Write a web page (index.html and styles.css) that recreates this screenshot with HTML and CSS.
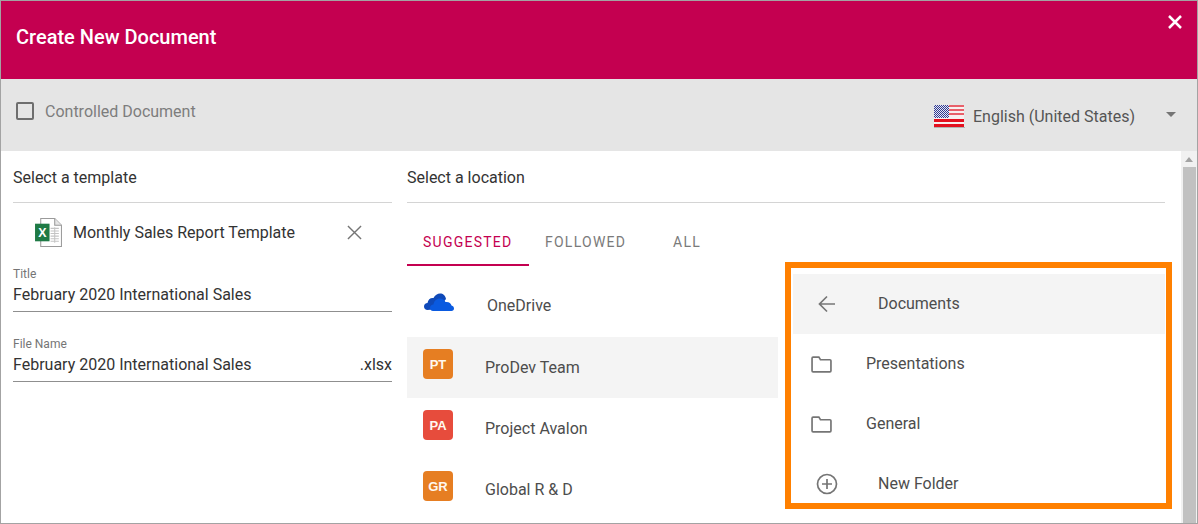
FILE: index.html
```html
<!DOCTYPE html>
<html lang="en">
<head>
    <meta charset="UTF-8">
    <meta name="viewport" content="width=device-width, initial-scale=1.0">
    <title>Create New Document</title>
    <link rel="stylesheet" href="styles.css">
</head>
<body>
    <div class="dialog">
        <header class="title-bar">
            <h1>Create New Document</h1>
            <svg class="close-icon" viewBox="0 0 16 16"><path d="M2 2L14 14M14 2L2 14"/></svg>
        </header>

        <div class="options-bar">
            <label class="controlled">
                <span class="checkbox"></span>
                Controlled Document
            </label>
            <div class="language">
                <svg class="flag" viewBox="0 0 31 23">
                    <defs>
                        <pattern id="stars" width="2" height="2" patternUnits="userSpaceOnUse">
                            <rect width="2" height="2" fill="#2f3a8f"/>
                            <rect width="1" height="1" fill="#e4e6f4"/>
                            <rect x="1" y="1" width="1" height="1" fill="#e4e6f4"/>
                        </pattern>
                    </defs>
                    <rect y="22" width="31" height="1" fill="#b3b3b3"/>
                    <rect width="30" height="22" fill="#f7f0f0"/>
                    <path fill="#e8606a" d="M0 0h30v2H0zM0 4h30v2H0zM0 8h30v2H0z"/>
                    <path fill="#e3101f" d="M0 14h30v3H0zM0 19h30v3H0z"/>
                    <rect width="15" height="13" fill="url(#stars)"/>
                </svg>
                <span>English (United States)</span>
                <span class="caret"></span>
            </div>
        </div>

        <div class="content">
            <div class="columns">
                <section class="template-col">
                    <h2 class="col-title">Select a template</h2>
                    <div class="template">
                        <svg class="excel-icon" viewBox="0 0 26 28">
                            <path fill="#fff" stroke="#9a9a9a" d="M5.500 .5H19L25.500 7V27.500H5.500z"/>
                            <path fill="#e6e6e6" stroke="#9a9a9a" d="M19 .5V7H25.500"/>
                            <path stroke="#c4c4c4" d="M15 10h8M15 12.500h8M15 15h8M15 17.500h8M15 20h8M15 22.500h8M19 9v15"/>
                            <rect y="5.500" width="14" height="17" fill="#1f7a45"/>
                            <text x="7" y="18" class="excel-x">X</text>
                        </svg>
                        <span class="template-name">Monthly Sales Report Template</span>
                        <svg class="clear-icon" viewBox="0 0 16 16"><path d="M1 1L15 15M15 1L1 15"/></svg>
                    </div>
                    <div class="field field-title">
                        <span class="field-label">Title</span>
                        <div class="field-value">February 2020 International Sales</div>
                    </div>
                    <div class="field field-file">
                        <span class="field-label">File Name</span>
                        <div class="field-value">
                            <span>February 2020 International Sales</span>
                            <span>.xlsx</span>
                        </div>
                    </div>
                </section>

                <section class="location-col">
                    <h2 class="col-title">Select a location</h2>
                    <div class="location-body">
                        <div class="sites">
                            <nav class="tabs">
                                <a class="tab tab-suggested active">SUGGESTED</a>
                                <a class="tab tab-followed">FOLLOWED</a>
                                <a class="tab tab-all">ALL</a>
                            </nav>
                            <ul class="site-list">
                                <li class="site site-onedrive">
                                    <svg class="onedrive-icon" viewBox="0 0 30 18">
                                        <path fill="#0f49b8" d="M3.500 17C1.500 17 0 15.500 0 13.500C0 11.500 1.500 10 3.500 10C4 6.500 6.500 4.500 9.500 5C11 2 13.500 0.500 16 0.500C19 0.500 21.500 2.500 22 6L14 16Z"/>
                                        <path fill="#0a5ae0" d="M9 18C7 18 6 16.500 6 15C6 13 7.500 11.500 9.500 11.500C10 8 12.500 5.500 16 5.500C18.500 5.500 20.500 7 21.500 9C25 8.500 27 10.500 27.500 12.500C29 12.800 30 14 30 15.500C30 17 29 18 27.500 18Z"/>
                                    </svg>
                                    <span>OneDrive</span>
                                </li>
                                <li class="site selected">
                                    <span class="avatar avatar-orange">PT</span>
                                    <span>ProDev Team</span>
                                </li>
                                <li class="site">
                                    <span class="avatar avatar-red">PA</span>
                                    <span>Project Avalon</span>
                                </li>
                                <li class="site">
                                    <span class="avatar avatar-orange">GR</span>
                                    <span>Global R &amp; D</span>
                                </li>
                            </ul>
                        </div>

                        <ul class="folders">
                            <li class="folder folder-back">
                                <svg class="folder-action" viewBox="0 0 24 24"><path d="M20 12H5M12 4.500L4.500 12L12 19.500"/></svg>
                                <span>Documents</span>
                            </li>
                            <li class="folder">
                                <svg class="folder-icon" viewBox="0 0 20 16"><path d="M1 3V14C1 14.600 1.400 15 2 15H18C18.600 15 19 14.600 19 14V4.500C19 3.900 18.600 3.500 18 3.500H9L7.500 1H2C1.400 1 1 1.400 1 2Z"/></svg>
                                <span>Presentations</span>
                            </li>
                            <li class="folder">
                                <svg class="folder-icon" viewBox="0 0 20 16"><path d="M1 3V14C1 14.600 1.400 15 2 15H18C18.600 15 19 14.600 19 14V4.500C19 3.900 18.600 3.500 18 3.500H9L7.500 1H2C1.400 1 1 1.400 1 2Z"/></svg>
                                <span>General</span>
                            </li>
                            <li class="folder folder-new">
                                <svg class="folder-action" viewBox="0 0 24 24"><circle cx="12" cy="12" r="9.500"/><path d="M12 7V17M7 12H17"/></svg>
                                <span>New Folder</span>
                            </li>
                        </ul>
                    </div>
                </section>
            </div>

            <div class="scrollbar">
                <span class="scroll-up"></span>
                <span class="scroll-thumb"></span>
            </div>
        </div>

        <div class="highlight"></div>
    </div>
</body>
</html>
```

FILE: styles.css
```css
* {
    box-sizing: border-box;
}
html, body {
    margin: 0;
    height: 100%;
    overflow: hidden;
}
body {
    font-family: Roboto, "Liberation Sans", sans-serif;
    font-size: 16px;
    color: #333;
    background-color: #fff;
}
ul {
    list-style: none;
    margin: 0;
    padding: 0;
}
.dialog {
    position: relative;
    display: flex;
    flex-direction: column;
    height: 524px;
    border: 1px solid #a3a3a3;
    overflow: hidden;
}
.title-bar {
    display: flex;
    justify-content: space-between;
    flex: none;
    height: 78px;
    padding: 13px 14px 0 15px;
    background-color: #c40050;
    color: #fff;
}
.title-bar h1 {
    margin: 10px 0 0;
    font-size: 20px;
    font-weight: 500;
    line-height: 26px;
}
.close-icon {
    width: 16px;
    height: 16px;
    fill: none;
    stroke: #fff;
    stroke-width: 2.500;
}
.options-bar {
    display: flex;
    justify-content: space-between;
    flex: none;
    height: 72px;
    background-color: #e5e5e5;
}
.controlled {
    display: flex;
    align-items: center;
    gap: 11px;
    height: 64px;
    padding-left: 15px;
    color: #7d7d7d;
}
.checkbox {
    width: 18px;
    height: 18px;
    border: 2px solid #6e6e6e;
    border-radius: 2px;
}
.language {
    display: flex;
    align-items: center;
    width: 263px;
    height: 74px;
    color: #555;
}
.flag {
    width: 31px;
    height: 23px;
    margin-right: 8px;
}
.caret {
    width: 0;
    height: 0;
    margin: -4px 0 0 31px;
    border-left: 5px solid transparent;
    border-right: 5px solid transparent;
    border-top: 5px solid #757575;
}
.content {
    display: flex;
    flex: 1;
    min-height: 0;
}
.columns {
    display: flex;
    flex: 1;
    padding: 0 16px 0 12px;
}
.col-title {
    height: 52px;
    margin: 0;
    padding-top: 17px;
    border-bottom: 1px solid #d4d4d4;
    font-size: 16px;
    font-weight: 400;
    line-height: 20px;
    color: #333;
}
.template-col {
    flex: none;
    width: 379px;
    margin-right: 15px;
}
.template {
    display: flex;
    align-items: center;
    height: 58px;
    padding-left: 22px;
}
.excel-icon {
    flex: none;
    width: 27px;
    height: 29px;
    margin-right: 11px;
}
.excel-x {
    font-family: "Liberation Sans", sans-serif;
    font-size: 12px;
    font-weight: 700;
    fill: #fff;
    text-anchor: middle;
}
.template-name {
    flex: 1;
}
.clear-icon {
    width: 15px;
    height: 15px;
    margin-right: 30px;
    fill: none;
    stroke: #757575;
    stroke-width: 1.500;
}
.field {
    display: flex;
    flex-direction: column;
}
.field-title {
    margin-top: 6px;
}
.field-file {
    margin-top: 25px;
}
.field-label {
    font-size: 12px;
    line-height: 14px;
    color: #757575;
}
.field-value {
    display: flex;
    justify-content: space-between;
    height: 31px;
    padding-top: 4px;
    border-bottom: 1px solid #8f8f8f;
    line-height: 20px;
}
.location-col {
    display: flex;
    flex: 1;
    flex-direction: column;
    min-width: 0;
}
.location-body {
    display: flex;
}
.sites {
    flex: none;
    width: 371px;
}
.tabs {
    display: flex;
    height: 63px;
}
.tab {
    height: 63px;
    padding-top: 31px;
    font-size: 14px;
    font-weight: 400;
    line-height: 16px;
    letter-spacing: 1.250px;
    color: #7a7a7a;
}
.tab-suggested {
    width: 122px;
    padding-left: 16px;
}
.tab-followed {
    width: 112px;
    padding-left: 16px;
}
.tab-all {
    padding-left: 32px;
}
.tab.active {
    color: #c40050;
    border-bottom: 2px solid #c40050;
}
.site-list {
    padding-top: 8px;
}
.site {
    display: flex;
    align-items: center;
    height: 61px;
    padding-left: 16px;
    color: #4d4d4d;
}
.site-onedrive {
    height: 63px;
    padding-left: 17px;
}
.site.selected {
    background-color: #f4f4f4;
}
.avatar {
    display: flex;
    align-items: center;
    justify-content: center;
    width: 30px;
    height: 30px;
    margin: -7px 32px 0 0;
    border-radius: 4px;
    font-family: "Liberation Sans", sans-serif;
    font-size: 13px;
    font-weight: 700;
    color: #fff8ee;
}
.avatar-orange {
    background-color: #e67e22;
}
.avatar-red {
    background-color: #e74c3c;
}
.onedrive-icon {
    width: 30px;
    height: 18px;
    margin: -7px 33px 0 0;
}
.folders {
    flex: 1;
    margin: 71px 0 0 15px;
}
.folder {
    display: flex;
    align-items: center;
    height: 60px;
    padding-left: 18px;
    color: #4d4d4d;
}
.folder span {
    margin-top: -2px;
}
.folder-back {
    background-color: #f4f4f4;
}
.folder-back, .folder-new {
    padding-left: 22px;
}
.folder-icon {
    width: 21px;
    height: 17px;
    margin-right: 34px;
    fill: none;
    stroke: #757575;
    stroke-width: 1.600;
}
.folder-action {
    width: 24px;
    height: 24px;
    margin-right: 39px;
    fill: none;
    stroke: #757575;
    stroke-width: 1.700;
}
.scrollbar {
    display: flex;
    flex-direction: column;
    align-items: center;
    flex: none;
    width: 16px;
    background-color: #f1f1f1;
}
.scroll-up {
    width: 0;
    height: 0;
    margin: 6px 0 5px;
    border-left: 4px solid transparent;
    border-right: 4px solid transparent;
    border-bottom: 5px solid #a3a3a3;
}
.scroll-thumb {
    flex: 1;
    width: 13px;
    background-color: #c1c1c1;
}
.highlight {
    position: absolute;
    left: 784px;
    top: 261px;
    width: 387px;
    height: 247px;
    border: 6px solid #ff8000;
    pointer-events: none;
}
```
